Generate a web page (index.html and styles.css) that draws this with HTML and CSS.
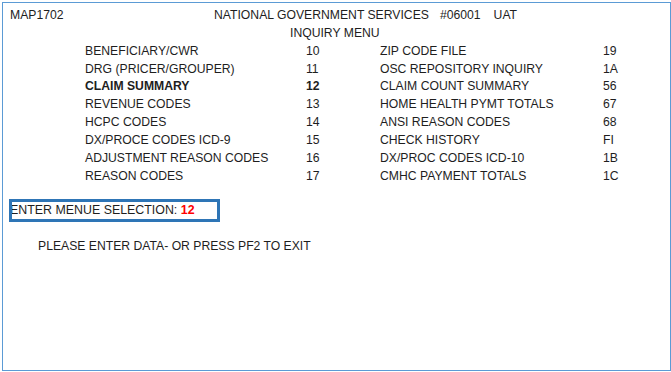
FILE: index.html
```html
<!DOCTYPE html>
<html>
<head>
<meta charset="utf-8">
<link rel="stylesheet" href="styles.css">
</head>
<body>
<div class="frame">
  <div class="header">
    <span class="mapid">MAP1702</span>
    <span class="title">NATIONAL GOVERNMENT SERVICES<span class="gap1">#06001</span><span class="gap2">UAT</span></span>
  </div>
  <div class="subtitle">INQUIRY MENU</div>
  <div class="menu">
    <span>BENEFICIARY/CWR</span><span>10</span><span>ZIP CODE FILE</span><span>19</span>
    <span>DRG (PRICER/GROUPER)</span><span>11</span><span>OSC REPOSITORY INQUIRY</span><span>1A</span>
    <span class="sel">CLAIM SUMMARY</span><span class="sel">12</span><span>CLAIM COUNT SUMMARY</span><span>56</span>
    <span>REVENUE CODES</span><span>13</span><span>HOME HEALTH PYMT TOTALS</span><span>67</span>
    <span>HCPC CODES</span><span>14</span><span>ANSI REASON CODES</span><span>68</span>
    <span>DX/PROCE CODES ICD-9</span><span>15</span><span>CHECK HISTORY</span><span>FI</span>
    <span>ADJUSTMENT REASON CODES</span><span>16</span><span>DX/PROC CODES ICD-10</span><span>1B</span>
    <span>REASON CODES</span><span>17</span><span>CMHC PAYMENT TOTALS</span><span>1C</span>
  </div>
  <div class="selbox"><span class="seltext">ENTER MENUE SELECTION: <b class="red">12</b></span></div>
  <div class="prompt">PLEASE ENTER DATA- OR PRESS PF2 TO EXIT</div>
</div>
</body>
</html>
```
FILE: styles.css
```css
html, body {
  margin: 0;
  padding: 0;
  background: #ffffff;
}
body {
  font-family: "Liberation Sans", Arial, sans-serif;
  font-size: 12.2px;
  color: #1e1e1e;
}
.frame {
  margin: 2px;
  width: 667px;
  height: 363px;
  border: 1px solid #5b9bd5;
  box-sizing: content-box;
  line-height: 17.85px;
  padding-top: 4px;
}
.frame > * {
  box-sizing: border-box;
}
.header {
  display: flex;
  padding-left: 7px;
}
.mapid {
  width: 204px;
}
.gap1 { margin-left: 11px; }
.gap2 { margin-left: 13px; }
.subtitle {
  padding-left: 287px;
}
.menu {
  display: grid;
  grid-template-columns: 221px 74px 223px auto;
  padding-left: 82px;
}
.sel {
  font-weight: bold;
}
.selbox {
  margin-top: 14px;
  margin-left: 6px;
  width: 211px;
  height: 23px;
  border: 3px solid #2e75b6;
  overflow: hidden;
  white-space: nowrap;
  line-height: 17px;
  font-size: 12.4px;
}
.seltext {
  display: inline-block;
  margin-left: -2px;
}
.red {
  color: #ff0000;
}
.prompt {
  margin-top: 16px;
  padding-left: 35px;
}
```
